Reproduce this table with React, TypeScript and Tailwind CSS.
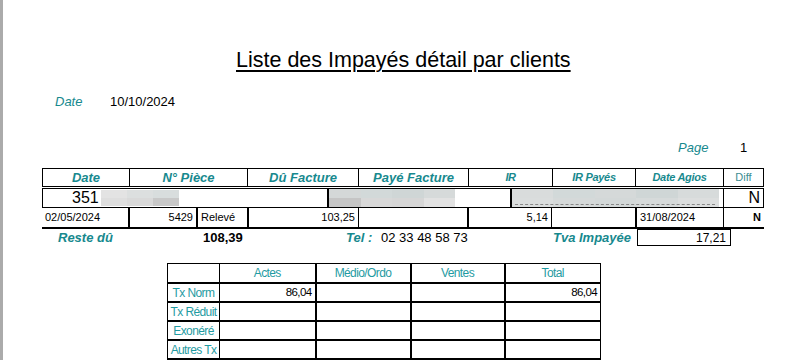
import React from 'react';

const teal = 'text-[#17898e]';

function Blur({ top, bottom }: { top: string[]; bottom: string[] }) {
  return (
    <div className="flex h-full flex-col">
      <div className="flex flex-1">
        {top.map((c, i) => (
          <div key={i} className="flex-1" style={{ backgroundColor: c }} />
        ))}
      </div>
      <div className="flex flex-1">
        {bottom.map((c, i) => (
          <div key={i} className="flex-1" style={{ backgroundColor: c }} />
        ))}
      </div>
    </div>
  );
}

export default function App() {
  const head = 'flex items-center justify-center border-l border-black font-bold italic';
  const cell = 'flex items-center px-[3px] text-[11px] text-black';
  const small = [
    ['Tx Norm', '86,04', '', '', '86,04'],
    ['Tx Réduit', '', '', '', ''],
    ['Exonéré', '', '', '', ''],
    ['Autres Tx', '', '', '', ''],
  ];

  return (
    <div className="flex h-[360px] w-[802px] overflow-hidden bg-white font-['Liberation_Sans',Arial,sans-serif]">
      <div className="w-[3px] shrink-0 bg-[#ababab]" />
      <div className="flex-1">
        <div className="pl-[233px] pt-[48px]">
          <h1 className="text-[21.5px] leading-[24px] text-black underline decoration-2 underline-offset-[3px]">
            Liste des Impayés détail par clients
          </h1>
        </div>

        <div className="mt-[22px] flex h-[16px] items-center pl-[52px] text-[13px] leading-[16px]">
          <span className={`w-[55px] italic ${teal}`}>Date</span>
          <span className="text-black">10/10/2024</span>
        </div>

        <div className="mt-[30px] flex h-[16px] items-center pl-[675px] text-[13px] leading-[16px]">
          <span className={`w-[62px] italic ${teal}`}>Page</span>
          <span className="text-black">1</span>
        </div>

        {/* main table */}
        <div className="ml-[39px] mt-[12px] w-[722px]">
          <div className={`flex h-[19px] border border-black text-[13px] ${teal}`}>
            <div className="flex w-[86px] items-center justify-center font-bold italic">Date</div>
            <div className={`${head} w-[118px]`}>N° Pièce</div>
            <div className={`${head} w-[111px]`}>Dû Facture</div>
            <div className={`${head} w-[110px]`}>Payé Facture</div>
            <div className={`${head} w-[84px] text-[11px] tracking-[-0.5px]`}>IR</div>
            <div className={`${head} w-[83px] text-[11px] tracking-[-0.3px]`}>IR Payés</div>
            <div className={`${head} w-[88px] text-[11px] tracking-[-0.3px]`}>Date Agios</div>
            <div className="flex w-[40px] items-center justify-center border-l border-black text-[11px] text-[#3c8d92]">Diff</div>
          </div>

          <div className="mt-[1px] flex h-[20px] border border-black">
            <div className="flex w-[284px] items-center pl-[29px] py-[1px]">
              <span className="mr-[2px] text-[16px] leading-none text-black">351</span>
              <div className="h-full w-[78px]">
                <Blur top={['#e3e3e3', '#dcdfdf', '#d8dddd']} bottom={['#dedede', '#d9d9d9', '#c8c8c8']} />
              </div>
            </div>
            <div className="w-[183px] border-l-2 border-black pr-[55px]">
              <Blur top={['#d4d8d8', '#d2d9d9', '#cfd6d6', '#d6dada']} bottom={['#c5c5c5', '#d8d8d8', '#d6d6d6', '#e2e2e2']} />
            </div>
            <div className="relative w-[213px] border-l-2 border-black pr-[4px]">
              <Blur top={['#d9dcdc', '#d2d9d9', '#d5d9d9', '#cfd6d6', '#d7dbdb']} bottom={['#dadddd', '#d5d9d9', '#d3d8d8', '#d6dada', '#dcdede']} />
              <div className="absolute bottom-[2px] left-[3px] h-[1px] w-[200px] border-b border-dashed border-[#888]" />
            </div>
            <div className="flex w-[40px] items-center justify-end border-l border-black pr-[3px] text-[16px] text-black">N</div>
          </div>

          <div className="flex h-[21px] border-b-2 border-black">
            <div className={`${cell} w-[88px] border-r-2 border-black`}>02/05/2024</div>
            <div className={`${cell} w-[68px] justify-end border-r-2 border-black`}>5429</div>
            <div className={`${cell} w-[51px] border-r-2 border-black`}>Relevé</div>
            <div className={`${cell} w-[110px] justify-end border-r border-black text-[#3b1030]`}>103,25</div>
            <div className={`${cell} w-[110px] border-r-2 border-black`} />
            <div className={`${cell} w-[83px] justify-end border-r border-black`}>5,14</div>
            <div className={`${cell} w-[85px] border-r-2 border-black`} />
            <div className={`${cell} w-[87px] border-r border-black`}>31/08/2024</div>
            <div className={`${cell} w-[40px] justify-end font-bold`}>N</div>
          </div>

          <div className="flex h-[17px] items-center text-[13px]">
            <span className={`ml-[16px] w-[145px] font-bold italic ${teal}`}>Reste dû</span>
            <span className="w-[143px] font-bold text-black">108,39</span>
            <span className={`w-[35px] font-bold italic ${teal}`}>Tel :</span>
            <span className="w-[172px] text-black">02 33 48 58 73</span>
            <span className={`w-[84px] font-bold italic ${teal}`}>Tva Impayée</span>
            <span className="flex h-[17px] w-[94px] items-center justify-end border border-black pr-[4px] text-[12px] text-black">17,21</span>
          </div>
        </div>

        {/* small table */}
        <table className="ml-[164px] mt-[17px] w-[433px] table-fixed border-collapse text-[12px] tracking-[-0.6px] text-[#1f9ba2]">
          <colgroup>
            <col className="w-[52px]" />
            <col className="w-[96px]" />
            <col className="w-[95px]" />
            <col className="w-[94px]" />
            <col className="w-[96px]" />
          </colgroup>
          <thead>
            <tr className="h-[19px] border-b-2 border-black">
              <th className="border border-black font-normal" />
              <th className="border-y border-l border-black font-normal">Actes</th>
              <th className="border-x-2 border-t border-black font-normal">Médio/Ordo</th>
              <th className="border-x-2 border-t border-black font-normal">Ventes</th>
              <th className="border border-black font-normal">Total</th>
            </tr>
          </thead>
          <tbody>
            {small.map((r) => (
              <tr key={r[0]} className="h-[19px] border-b-2 border-black">
                <td className="border border-black px-[1px] text-center leading-none">{r[0]}</td>
                <td className="border-r-2 border-black pr-[3px] text-right text-[11.5px] text-black">{r[1]}</td>
                <td className="border-r-2 border-black pr-[3px] text-right text-[11.5px] text-black">{r[2]}</td>
                <td className="border-r-2 border-black pr-[3px] text-right text-[11.5px] text-black">{r[3]}</td>
                <td className="border-r border-black pr-[3px] text-right text-[11.5px] text-black">{r[4]}</td>
              </tr>
            ))}
          </tbody>
        </table>
      </div>
    </div>
  );
}
